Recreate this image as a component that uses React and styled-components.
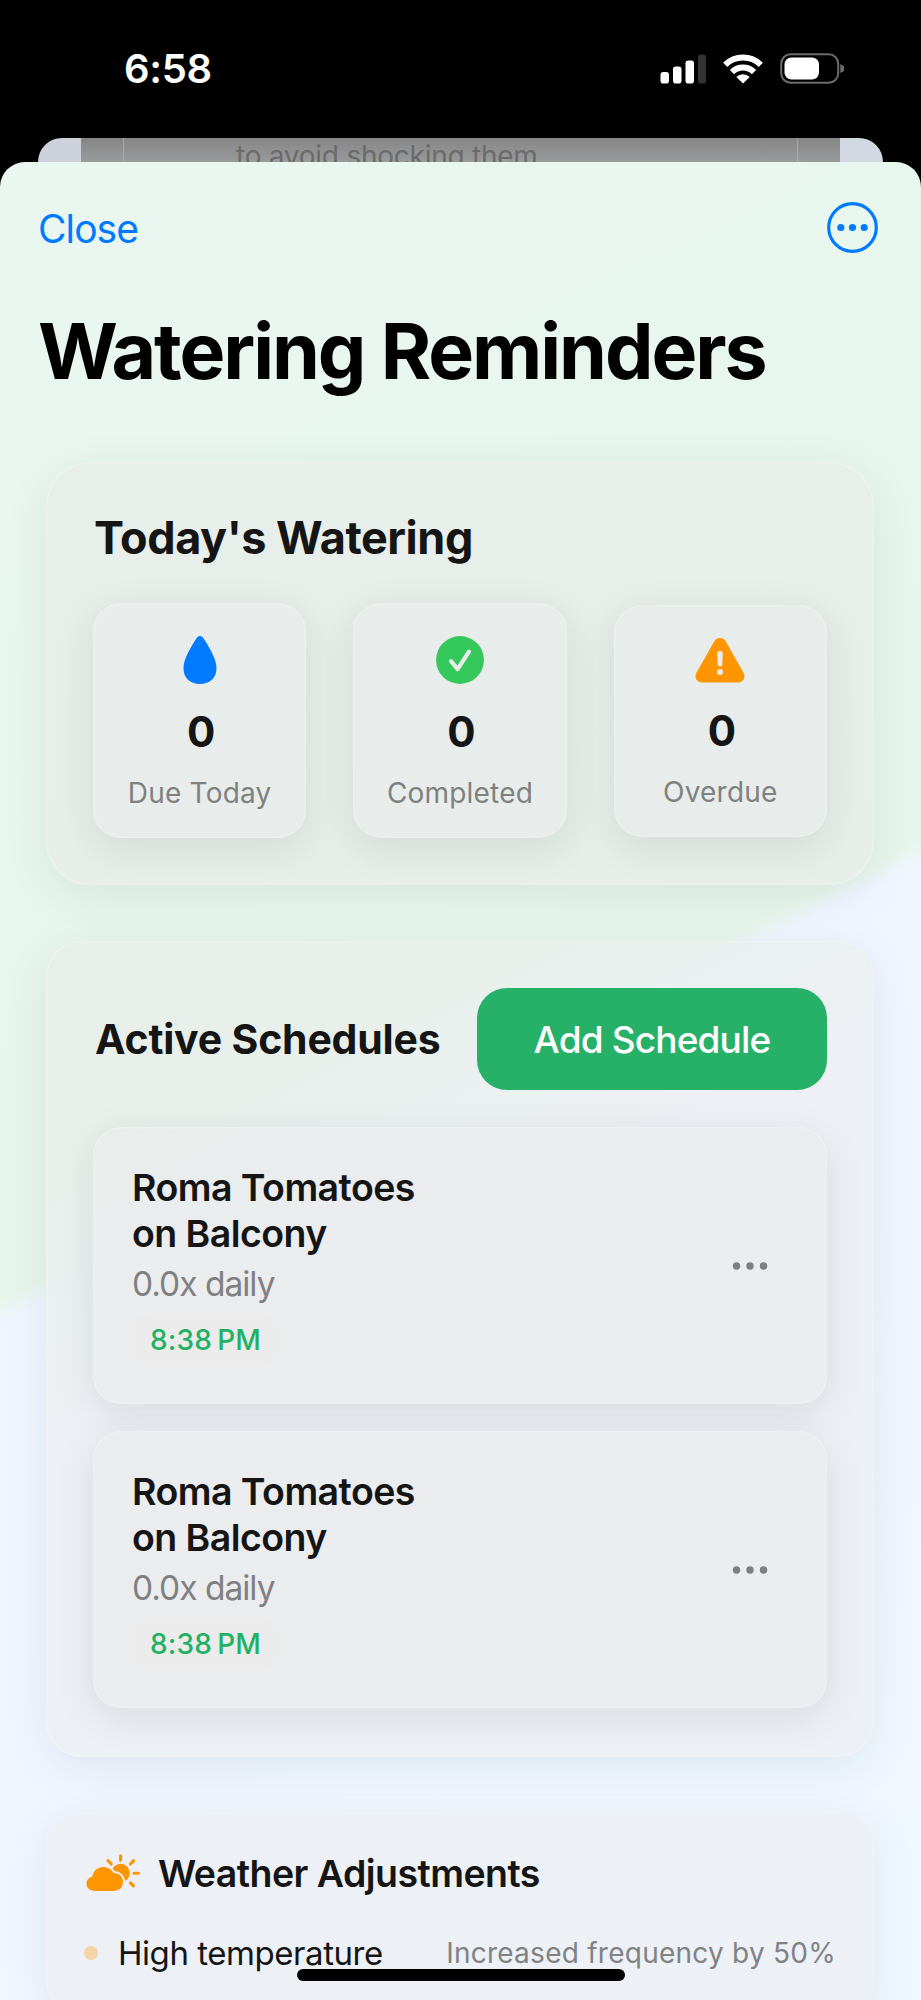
import styled, { createGlobalStyle } from "styled-components"

const GlobalStyle = createGlobalStyle`
    * {
        box-sizing: border-box;
    }

    body {
        margin: 0;
        background: #000;
        font-family: Inter, "Liberation Sans", sans-serif;
        color: #151515;
    }
`

const Phone = styled.div`
    position: relative;
    width: 921px;
    height: 2000px;
    overflow: hidden;
    background: #000;
`

const StatusBar = styled.div`
    height: 138px;
    padding: 0 77px 1px 124px;
    display: flex;
    align-items: center;
    justify-content: space-between;
`

const Time = styled.span`
    color: white;
    font-size: 40px;
    font-weight: 600;
    letter-spacing: -0.3px;
`

const StatusIcons = styled.div`
    display: flex;
    align-items: center;
    gap: 17px;
`

const Backdrop = styled.div`
    height: 24px;
    margin: 0 38px;
    padding: 0 43px;
    background: linear-gradient(90deg, #cdd2da, #d2d8e2);
    border-radius: 24px 24px 0 0;
    overflow: hidden;
`

const BackdropPanel = styled.div`
    height: 24px;
    padding: 0 42px;
    background: linear-gradient(#868686, #999a9b);
`

const BackdropText = styled.div`
    height: 24px;
    padding-left: 112px;
    border-left: 1px solid #a9aaaa;
    border-right: 1px solid #a9aaaa;
    color: #6b6b6b;
    font-size: 28px;
    line-height: 37px;
    letter-spacing: -0.25px;
    white-space: nowrap;
`

const Sheet = styled.div`
    height: 1838px;
    padding: 0 47px 0 46px;
    border-radius: 25px 25px 0 0;
    background: linear-gradient(153.4deg, #e9f7f0 0%, #e7f6ec 49.5%, #f0f5ff 50.6%, #f0f8ff 100%);
    overflow: hidden;
`

const Toolbar = styled.div`
    height: 133px;
    margin: 0 -4px 0 -8px;
    display: flex;
    align-items: center;
    justify-content: space-between;
`

const CloseButton = styled.button`
    border: none;
    background: none;
    padding: 0;
    font-family: inherit;
    font-size: 39px;
    color: #007aff;
    letter-spacing: -0.9px;
`

const Title = styled.h1`
    margin: 9px 0 64px -8px;
    font-size: 77px;
    line-height: 94px;
    font-weight: 700;
    color: #000;
    letter-spacing: -2.05px;
    white-space: nowrap;
`

const Card = styled.section`
    margin-bottom: ${(p) => p.$gap || 0}px;
    padding: ${(p) => p.$padding};
    background: ${(p) => p.$fill};
    border-radius: ${(p) => p.$radius || 44}px;
    box-shadow: 0 10px 46px rgba(10, 35, 45, 0.08), inset 0 0 0 1.5px rgba(255, 255, 255, 0.22);
`

const CardTitle = styled.h2`
    margin: 0 0 37px 1px;
    font-size: 45px;
    line-height: 57px;
    font-weight: 650;
    letter-spacing: -0.45px;
`

const Stats = styled.div`
    display: grid;
    grid-template-columns: repeat(3, 1fr);
    gap: 47px;
    align-items: center;
`

const Stat = styled.div`
    display: flex;
    flex-direction: column;
    align-items: center;
    padding: 33px 0 26px;
    background: #e8ecea;
    border-radius: 28px;
    box-shadow: 0 10px 40px rgba(20, 35, 30, 0.095), inset 0 0 0 1.5px rgba(255, 255, 255, 0.22);
`

const StatValue = styled.div`
    margin: 24px 0 19px;
    padding-left: 2px;
    font-size: 42px;
    line-height: 47px;
    font-weight: 700;
    letter-spacing: -1px;
`

const StatLabel = styled.div`
    font-size: 28px;
    line-height: 38px;
    color: #7f817f;
    letter-spacing: 0.2px;
`

const SectionHeader = styled.div`
    display: flex;
    align-items: center;
    justify-content: space-between;
    margin-bottom: 37px;
    padding-left: 2px;
`

const SectionTitle = styled.h2`
    margin: 0;
    font-size: 41px;
    font-weight: 650;
    letter-spacing: -0.2px;
`

const AddButton = styled.button`
    width: 350px;
    height: 102px;
    border: none;
    border-radius: 30px;
    background: #27b168;
    color: white;
    font-family: inherit;
    font-size: 37px;
    font-weight: 500;
    letter-spacing: -0.85px;
`

const Schedules = styled.div`
    display: flex;
    flex-direction: column;
    gap: 27px;
`

const Schedule = styled.div`
    display: flex;
    align-items: center;
    justify-content: space-between;
    height: 277px;
    padding: 0 59px 0 39px;
    background: ${(p) => p.$fill};
    border-radius: 28px;
    box-shadow: 0 10px 40px rgba(20, 35, 45, 0.095), inset 0 0 0 1.5px rgba(255, 255, 255, 0.22);
`

const PlantName = styled.div`
    width: 300px;
    font-size: 37.5px;
    line-height: 45.5px;
    font-weight: 600;
    letter-spacing: -0.55px;
`

const Frequency = styled.div`
    margin: 7px 0 9px;
    font-size: 33.5px;
    line-height: 42px;
    color: #808082;
    letter-spacing: -1px;
`

const TimePill = styled.span`
    display: flex;
    align-items: center;
    width: 147px;
    height: 52px;
    padding-left: 18px;
    border-radius: 19px;
    background: #eaebea;
    font-size: 28px;
    font-weight: 500;
    color: #22b062;
    letter-spacing: 0.2px;
    white-space: pre;
`

const WeatherHeader = styled.div`
    display: flex;
    align-items: center;
    height: 46px;
    gap: 18px;
    font-size: 37.5px;
    font-weight: 600;
    letter-spacing: -0.55px;
`

const WeatherRow = styled.div`
    display: flex;
    align-items: center;
    height: 42px;
    margin-top: 36px;
    margin-left: -2px;
    white-space: nowrap;
`

const Dot = styled.span`
    width: 14px;
    height: 14px;
    border-radius: 50%;
    background: #f3d5a7;
`

const Condition = styled.span`
    margin-left: 20px;
    font-size: 33px;
    letter-spacing: -0.45px;
`

const Effect = styled.span`
    margin-left: auto;
    margin-right: -2px;
    font-size: 28px;
    color: #808284;
    letter-spacing: 0.25px;
`

const HomeIndicator = styled.div`
    position: absolute;
    left: 297px;
    bottom: 19px;
    width: 328px;
    height: 12px;
    border-radius: 6px;
    background: #000;
`

const SignalIcon = () => (
  <svg width="46" height="30" viewBox="0 0 46 30">
    <rect x="0.5" y="18" width="8.5" height="11.5" rx="2.8" fill="#fff" />
    <rect x="13" y="12.5" width="8.5" height="17" rx="2.8" fill="#fff" />
    <rect x="25.5" y="6.5" width="8.5" height="23" rx="2.8" fill="#fff" />
    <rect x="38" y="0.5" width="8" height="29" rx="2.8" fill="#333" />
  </svg>
)

const WifiIcon = () => (
  <svg width="40" height="30" viewBox="0 0 40 30">
    <g fill="none" stroke="#fff" strokeWidth="6">
      <path d="M2.2 10.8 A25.5 25.5 0 0 1 37.8 10.8" />
      <path d="M9 18.2 A15.5 15.5 0 0 1 31 18.2" />
    </g>
    <path d="M20 29.5 L13.3 23 A9.5 9.5 0 0 1 26.7 23 Z" fill="#fff" />
  </svg>
)

const BatteryIcon = () => (
  <svg width="64" height="31" viewBox="0 0 64 31">
    <rect x="1.2" y="1.2" width="57" height="28.6" rx="9.5" fill="none" stroke="#6b6b6b" strokeWidth="2" />
    <rect x="4.5" y="4.5" width="34.5" height="22" rx="7" fill="#fff" />
    <path d="M60.3 11 Q64.5 12.5 64.5 15.5 Q64.5 18.5 60.3 20 Z" fill="#6b6b6b" />
  </svg>
)

const MoreCircleIcon = () => (
  <svg width="51" height="53" viewBox="0 0 51 53" fill="#007aff">
    <circle cx="25.5" cy="25.5" r="23.8" fill="none" stroke="#007aff" strokeWidth="3.2" />
    <circle cx="13.8" cy="25.5" r="3.6" />
    <circle cx="25.5" cy="25.5" r="3.6" />
    <circle cx="37.2" cy="25.5" r="3.6" />
  </svg>
)

const DropIcon = () => (
  <svg width="34" height="48" viewBox="0 0 34 48">
    <path
      d="M17 0 C18.8 0 19.8 1.1 20.8 2.8 C25 9.7 33.5 22 33.5 32.3 C33.5 41.8 27 48 17 48 C7 48 0.5 41.8 0.5 32.3 C0.5 22 9 9.7 13.2 2.8 C14.2 1.1 15.2 0 17 0 Z"
      fill="#007aff"
    />
  </svg>
)

const CheckIcon = () => (
  <svg width="48" height="48" viewBox="0 0 48 48">
    <circle cx="24" cy="24" r="23.9" fill="#34c759" />
    <path d="M15 25.2 L21.6 33.2 L33 15.7" fill="none" stroke="#e8ecea" strokeWidth="4.2" strokeLinecap="round" strokeLinejoin="round" />
  </svg>
)

const WarningIcon = () => (
  <svg width="50" height="45" viewBox="0 0 50 45">
    <path
      d="M19.2 3.4 C21.8 -1.1 28.2 -1.1 30.8 3.4 L48.5 34.8 C51 39.4 48.2 44.5 43.2 44.5 L6.8 44.5 C1.8 44.5 -1 39.4 1.5 34.8 Z"
      fill="#ff9500"
    />
    <path d="M22.2 15.6 Q22.2 12.9 25 12.9 Q27.8 12.9 27.8 15.6 L27.3 26.3 Q27.2 28.4 25 28.4 Q22.8 28.4 22.7 26.3 Z" fill="#e8ecea" />
    <circle cx="25" cy="34" r="3" fill="#e8ecea" />
  </svg>
)

const EllipsisIcon = () => (
  <svg width="36" height="10" viewBox="0 0 36 10" fill="#7e7e80">
    <circle cx="4.5" cy="5" r="3.7" />
    <circle cx="18" cy="5" r="3.7" />
    <circle cx="31.5" cy="5" r="3.7" />
  </svg>
)

const CloudSunIcon = () => (
  <svg width="54" height="38" viewBox="0 0 54 38">
    <circle cx="34.6" cy="19" r="9.2" fill="#ff9500" />
    <path
      d="M9 37 C3.5 37 0.5 33.6 0.5 29.8 C0.5 26 3 23.4 6.3 22.7 C7.5 16.4 11.8 13 17.2 13 C21.8 13 25.5 15.4 27.5 19 C33 18.6 37 22.8 37 27.8 C37 33.2 33 37 28 37 Z"
      fill="#ff9500"
      stroke="#edf0f4"
      strokeWidth="4"
      paintOrder="stroke"
    />
    <path d="M34.6 1.7 V6.2 M22 6.6 L25.2 10 M47.6 6.6 L44.4 10 M52.3 19.2 H48 M47.4 31.9 L44.4 28.8" stroke="#ff9500" strokeWidth="3.1" strokeLinecap="round" />
  </svg>
)

const stats = [
  { label: "Due Today", value: 0, icon: <DropIcon /> },
  { label: "Completed", value: 0, icon: <CheckIcon /> },
  { label: "Overdue", value: 0, icon: <WarningIcon /> },
]

const schedules = [
  {
    id: 1,
    plant: "Roma Tomatoes on Balcony",
    times: 0,
    at: "8:38\u2009PM",
    fill: "linear-gradient(150deg, #e8edeb, #ebecee 35%, #ebecee)",
  },
  {
    id: 2,
    plant: "Roma Tomatoes on Balcony",
    times: 0,
    at: "8:38\u2009PM",
    fill: "#ebecee",
  },
]

const App = () => {
  return (
    <Phone>
      <GlobalStyle />
      <StatusBar>
        <Time>6:58</Time>
        <StatusIcons>
          <SignalIcon />
          <WifiIcon />
          <BatteryIcon />
        </StatusIcons>
      </StatusBar>

      <Backdrop>
        <BackdropPanel>
          <BackdropText>to avoid shocking them</BackdropText>
        </BackdropPanel>
      </Backdrop>

      <Sheet>
        <Toolbar>
          <CloseButton>Close</CloseButton>
          <MoreCircleIcon />
        </Toolbar>
        <Title>Watering Reminders</Title>

        <Card $gap={56} $padding="47px" $fill="linear-gradient(#e8efeb, #e7eee9)">
          <CardTitle>Today's Watering</CardTitle>
          <Stats>
            {stats.map((stat) => (
              <Stat key={stat.label}>
                {stat.icon}
                <StatValue>{stat.value}</StatValue>
                <StatLabel>{stat.label}</StatLabel>
              </Stat>
            ))}
          </Stats>
        </Card>

        <Card
          $gap={55}
          $padding="47px 47px 49px"
          $radius={36}
          $fill="linear-gradient(153.4deg, #e8efea 0%, #e9f0ec 20%, #edf0f4 40%, #edf0f4 100%)"
        >
          <SectionHeader>
            <SectionTitle>Active Schedules</SectionTitle>
            <AddButton>Add Schedule</AddButton>
          </SectionHeader>
          <Schedules>
            {schedules.map((item) => (
              <Schedule key={item.id} $fill={item.fill}>
                <div>
                  <PlantName>{item.plant}</PlantName>
                  <Frequency>{item.times.toFixed(1)}x daily</Frequency>
                  <TimePill>{item.at}</TimePill>
                </div>
                <EllipsisIcon />
              </Schedule>
            ))}
          </Schedules>
        </Card>

        <Card $padding="38px 40px 39px" $radius={32} $fill="#edf0f4">
          <WeatherHeader>
            <CloudSunIcon />
            Weather Adjustments
          </WeatherHeader>
          <WeatherRow>
            <Dot />
            <Condition>High temperature</Condition>
            <Effect>Increased frequency by 50%</Effect>
          </WeatherRow>
        </Card>
      </Sheet>
      <HomeIndicator />
    </Phone>
  )
}

export default App
